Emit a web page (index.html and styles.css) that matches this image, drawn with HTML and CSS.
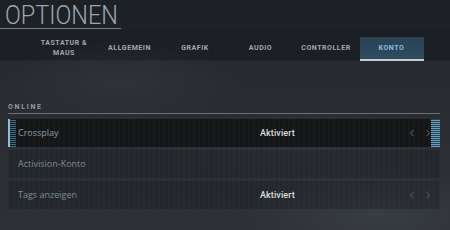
FILE: index.html
```html
<!DOCTYPE html>
<html lang="de">
<head>
<meta charset="utf-8">
<title>Optionen</title>
<link rel="stylesheet" href="styles.css">
</head>
<body>
<div class="screen">
  <header class="head">
    <h1 class="title"><span class="title-text">OPTIONEN</span></h1>
  </header>
  <nav class="tabs">
    <div class="tab"><span>TASTATUR &amp;<br>MAUS</span></div>
    <div class="tab"><span>ALLGEMEIN</span></div>
    <div class="tab"><span>GRAFIK</span></div>
    <div class="tab"><span>AUDIO</span></div>
    <div class="tab"><span>CONTROLLER</span></div>
    <div class="tab tab-active"><span>KONTO</span></div>
  </nav>
  <section class="group">
    <div class="group-label">ONLINE</div>
    <div class="rows">
      <div class="row row-active">
        <span class="name">Crossplay</span>
        <span class="value">Aktiviert</span>
        <span class="arrows">
          <svg class="chev" viewBox="0 0 6 8" width="6" height="8"><path d="M4.5 0.8 L1.5 4 L4.5 7.2" fill="none" stroke="currentColor" stroke-width="1.1"/></svg>
          <svg class="chev" viewBox="0 0 6 8" width="6" height="8"><path d="M1.5 0.8 L4.5 4 L1.5 7.2" fill="none" stroke="currentColor" stroke-width="1.1"/></svg>
        </span>
      </div>
      <div class="row">
        <span class="name">Activision-Konto</span>
        <span class="value"></span>
        <span class="arrows"></span>
      </div>
      <div class="row">
        <span class="name">Tags anzeigen</span>
        <span class="value">Aktiviert</span>
        <span class="arrows">
          <svg class="chev" viewBox="0 0 6 8" width="6" height="8"><path d="M4.5 0.8 L1.5 4 L4.5 7.2" fill="none" stroke="currentColor" stroke-width="1.1"/></svg>
          <svg class="chev" viewBox="0 0 6 8" width="6" height="8"><path d="M1.5 0.8 L4.5 4 L1.5 7.2" fill="none" stroke="currentColor" stroke-width="1.1"/></svg>
        </span>
      </div>
    </div>
  </section>
</div>
</body>
</html>
```
FILE: styles.css
```css
* { box-sizing: border-box; }
html, body { margin: 0; padding: 0; }
body {
  width: 450px;
  height: 230px;
  overflow: hidden;
  background: #23272c;
}
.screen {
  width: 450px;
  height: 230px;
  overflow: hidden;
  display: flex;
  flex-direction: column;
  font-family: "Open Sans", "Liberation Sans", sans-serif;
  background:
    radial-gradient(ellipse 140px 50px at 380px 215px, rgba(70,76,82,0.45), rgba(70,76,82,0) 100%),
    radial-gradient(ellipse 120px 40px at 120px 80px, rgba(60,66,72,0.35), rgba(60,66,72,0) 100%),
    radial-gradient(ellipse 160px 40px at 300px 150px, rgba(60,66,72,0.3), rgba(60,66,72,0) 100%),
    linear-gradient(180deg, #1d2126 0px, #1e2227 29px, #1b1e23 31px, #1c1f24 60px, #262a2f 61px, #2a2e33 120px, #2d3136 230px);
}
.head {
  flex: none;
  position: relative;
}
.head::after {
  content: "";
  position: absolute;
  left: 0;
  bottom: 2px;
  width: 121px;
  height: 1px;
  background: #6f7b84;
}
.title {
  margin: 0;
  padding: 0 0 0 5px;
  font-family: Roboto, "Liberation Sans", sans-serif;
  font-weight: 300;
  font-size: 26px;
  line-height: 31px;
  white-space: nowrap;
  color: #9aa7b1;
}
.title-text {
  display: inline-block;
  transform: scaleX(0.9);
  transform-origin: 0 50%;
}
.tabs {
  height: 30px;
  flex: none;
  display: flex;
  align-items: flex-end;
  gap: 1.5px;
  padding-left: 32px;
}
.tab {
  width: 64px;
  height: 24px;
  padding-bottom: 2px;
  display: flex;
  align-items: center;
  justify-content: center;
  text-align: center;
  font-family: Roboto, "Liberation Sans", sans-serif;
  font-weight: 700;
  font-size: 7px;
  line-height: 10px;
  letter-spacing: 0.55px;
  color: #a3a8ad;
}
.tab-active {
  background: linear-gradient(180deg, #2a4355 0%, #2f4b5f 100%);
  border-bottom: 2px solid #c3ccd3;
  padding-bottom: 0;
  color: #7fc0e4;
}
.group {
  padding: 0 10px 0 8px;
  margin-top: 42px;
}
.group-label {
  font-family: Roboto, "Liberation Sans", sans-serif;
  font-weight: 700;
  font-size: 7px;
  line-height: 8px;
  letter-spacing: 1.7px;
  color: #969ba1;
  padding-bottom: 2px;
  border-bottom: 1px solid #6a6f75;
}
.rows {
  margin-top: 5px;
  display: flex;
  flex-direction: column;
  gap: 3px;
}
.row {
  position: relative;
  height: 28px;
  display: grid;
  grid-template-columns: 242px 1fr auto;
  align-items: center;
  padding: 0 9px 0 10px;
  background:
    repeating-linear-gradient(90deg, rgba(255,255,255,0.012) 0 2px, rgba(0,0,0,0.03) 2px 5px),
    rgba(22,24,27,0.32);
  font-size: 9px;
  line-height: 12px;
}
.row-active {
  background:
    repeating-linear-gradient(90deg, rgba(255,255,255,0.015) 0 2px, rgba(0,0,0,0.06) 2px 5px),
    #141617;
}
.row-active::before {
  content: "";
  position: absolute;
  left: 0;
  top: 0;
  bottom: 0;
  width: 8px;
  background:
    linear-gradient(90deg, #8cc0df 0 2px, transparent 2px),
    repeating-linear-gradient(0deg, rgba(110,170,205,0.55) 0 1px, rgba(30,50,60,0.2) 1px 2px);
  background-size: 100% 100%, 6px 100%;
  background-position: 0 0, 2px 0;
  background-repeat: no-repeat;
}
.row-active::after {
  content: "";
  position: absolute;
  right: 0;
  top: 0;
  bottom: 0;
  width: 9px;
  background:
    repeating-linear-gradient(0deg, rgba(120,185,220,0.85) 0 1px, rgba(60,110,140,0.5) 1px 2px);
}
.name {
  color: #7d8a93;
  white-space: nowrap;
}
.row-active .name {
  color: #8b9ea9;
}
.value {
  font-family: Roboto, "Liberation Sans", sans-serif;
  color: #dcdddf;
  font-weight: 500;
  font-size: 9px;
  letter-spacing: 0.1px;
  white-space: nowrap;
}
.arrows {
  display: flex;
  align-items: center;
  gap: 10px;
  color: #4b5055;
}
.chev { display: block; }
```
